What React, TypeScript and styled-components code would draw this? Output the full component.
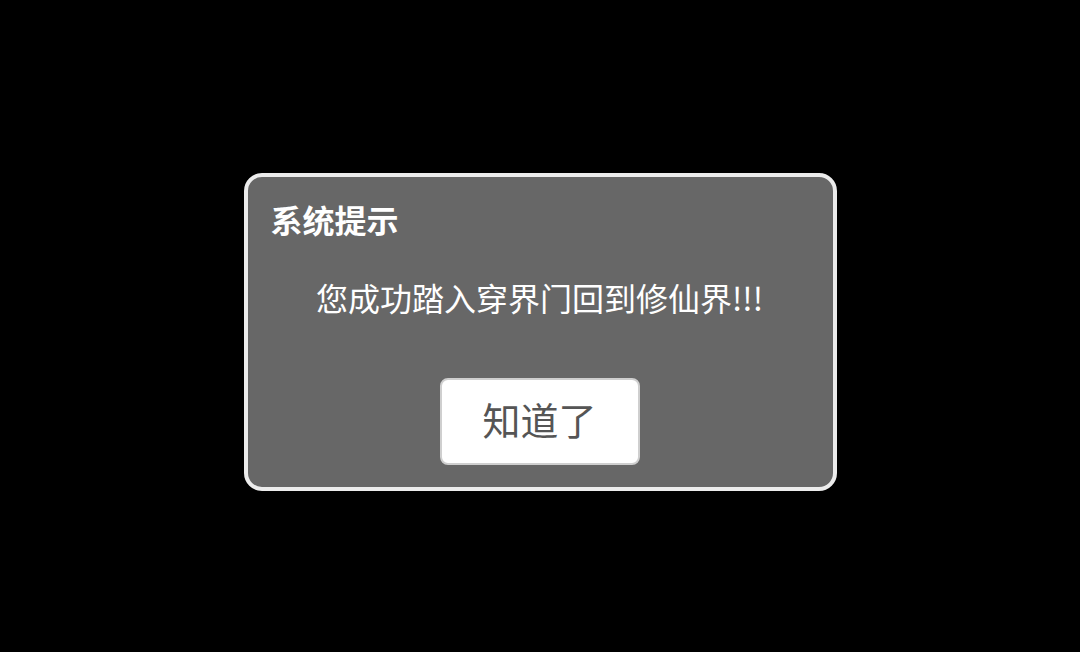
import styled, { createGlobalStyle } from "styled-components";

const GlobalStyle = createGlobalStyle`
  html, body {
    margin: 0;
    padding: 0;
    background: #000;
  }
  body {
    font-family: "Noto Sans CJK SC", "Noto Sans", sans-serif;
  }
`;

const Screen = styled.div`
  width: 1080px;
  height: 652px;
  display: flex;
  justify-content: center;
  align-items: flex-start;
  padding-top: 173px;
  box-sizing: border-box;
  background: #000;
`;

const Dialog = styled.div`
  width: 593px;
  height: 318px;
  box-sizing: border-box;
  border: 4px solid #ececec;
  border-radius: 18px;
  background: #676767;
  padding: 24px 24px 22px 23px;
  display: flex;
  flex-direction: column;
`;

const Title = styled.h2`
  margin: 0;
  font-size: 32px;
  line-height: 36px;
  font-weight: 700;
  color: #fff;
`;

const Message = styled.p`
  margin: 40px 0 0;
  font-size: 32px;
  line-height: 40px;
  color: #fff;
  text-align: center;
`;

const Actions = styled.div`
  margin-top: auto;
  display: flex;
  justify-content: center;
`;

const Btn = styled.button`
  width: 200px;
  height: 87px;
  box-sizing: border-box;
  border: 2px solid #cfcfcf;
  border-radius: 8px;
  background: #fff;
  color: #555;
  font-family: inherit;
  font-size: 38px;
  line-height: 1;
  padding: 0 0 6px;
  cursor: pointer;
`;

function App() {
  return (
    <>
      <GlobalStyle />
      <Screen>
        <Dialog>
          <Title>系统提示</Title>
          <Message>您成功踏入穿界门回到修仙界!!!</Message>
          <Actions>
            <Btn>知道了</Btn>
          </Actions>
        </Dialog>
      </Screen>
    </>
  );
}

export default App;
